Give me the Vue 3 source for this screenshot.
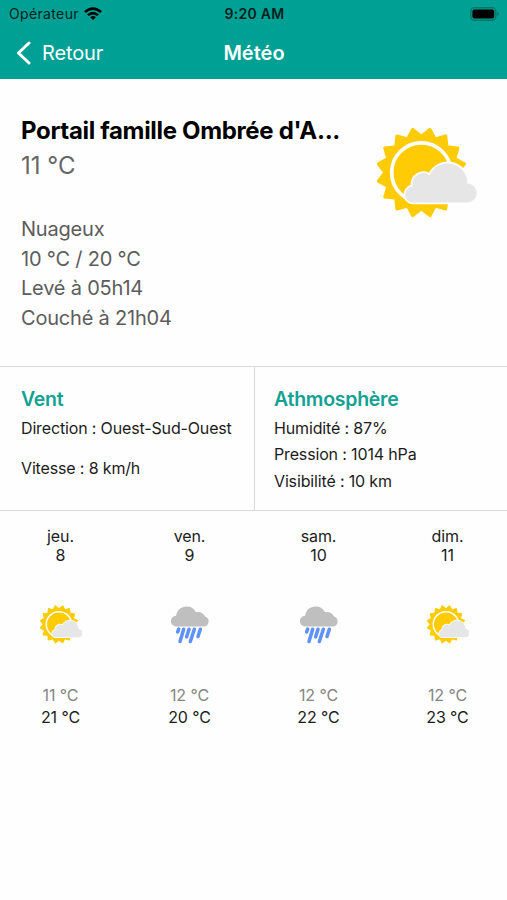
<script setup>
import { h } from 'vue'

// Sixteen-pointed sun outline with softened tips
const STEP = 22.5
const point = (r, deg) => {
  const a = (deg * Math.PI) / 180
  return `${(133 + r * Math.cos(a)).toFixed(1)} ${(136 + r * Math.sin(a)).toFixed(1)}`
}
let sunPath = `M${point(132, -STEP / 2)}`
for (let i = 0; i < 16; i++) {
  const valley = i * STEP
  sunPath += `L${point(112, valley - 2)}Q${point(107, valley)} ${point(112, valley + 2)}L${point(132, valley + STEP / 2)}`
}
sunPath += 'Z'

const cloudPath =
  'M110 226H270A28 28 0 0 0 271 169A59 59 0 0 0 158 144A33 33 0 0 0 107 177C78 183 78 222 106 226Z'

const SunCloud = () =>
  h('svg', { viewBox: '0 0 300 272' }, [
    h('path', { d: sunPath, fill: '#ffcb05', stroke: '#ffcb05', 'stroke-width': 9, 'stroke-linejoin': 'round' }),
    h('circle', { cx: 133, cy: 136, r: 89, fill: 'none', stroke: '#fefefe', 'stroke-width': 11 }),
    h('path', { d: cloudPath, fill: '#e6e6e7', stroke: '#fefefe', 'stroke-width': 11, 'paint-order': 'stroke' }),
  ])

const RainCloud = () =>
  h('svg', { viewBox: '0 0 116 115' }, [
    h('path', {
      d: 'M16 64A16 16 0 0 1 15 32A32 32 0 0 1 75 21A25 25 0 0 1 102 34A15.5 15.5 0 0 1 100 64Z',
      fill: '#bfbfbf',
    }),
    h('path', {
      d: 'M23 72L20 80M38 72L27 109M54 72L47 95M70 72L58 109M88 72L81 94',
      fill: 'none',
      stroke: '#5e92f7',
      'stroke-width': 10.5,
      'stroke-linecap': 'round',
    }),
  ])

const days = [
  { name: 'jeu.', date: 8, icon: SunCloud, kind: 'sun', min: 11, max: 21 },
  { name: 'ven.', date: 9, icon: RainCloud, kind: 'rain', min: 12, max: 20 },
  { name: 'sam.', date: 10, icon: RainCloud, kind: 'rain', min: 12, max: 22 },
  { name: 'dim.', date: 11, icon: SunCloud, kind: 'sun', min: 12, max: 23 },
]
</script>

<template>
  <div class="screen">
    <header>
      <div class="status">
        <div class="carrier">
          <span>Opérateur</span>
          <svg class="wifi" viewBox="0 0 18 13">
            <path d="M0 4.1Q9-3.7 18 4.1L16.2 6Q9-.2 1.8 6Z" />
            <path d="M3 7.2Q9 2.2 15 7.2L13.1 9.1Q9 5.8 4.9 9.1Z" />
            <path d="M6.1 10.2Q9 8 11.9 10.2L9 13Z" />
          </svg>
        </div>
        <span class="clock">9:20 AM</span>
        <svg class="battery" viewBox="0 0 30 14">
          <rect x=".8" y=".8" width="25" height="12.4" rx="3.6" fill="none" stroke="#06766b" stroke-width="1.4" />
          <rect x="2.4" y="2.5" width="21.8" height="9" rx="2" />
          <path d="M27.2 4.8Q31 7 27.2 9.2Z" fill="#06766b" />
        </svg>
      </div>
      <nav>
        <div class="back">
          <svg viewBox="0 0 15 24"><path d="M13 2L2.5 12L13 22" /></svg>
          <span>Retour</span>
        </div>
        <h1>Météo</h1>
      </nav>
    </header>

    <section class="current">
      <div class="summary">
        <h2>Portail famille Ombrée d'A...</h2>
        <p class="now">11 °C</p>
        <div class="details">
          <p>Nuageux</p>
          <p>10 °C / 20 °C</p>
          <p>Levé à 05h14</p>
          <p>Couché à 21h04</p>
        </div>
      </div>
      <SunCloud class="hero" />
    </section>

    <section class="panels">
      <div class="panel">
        <h3>Vent</h3>
        <p>Direction : Ouest-Sud-Ouest</p>
        <p class="speed">Vitesse : 8 km/h</p>
      </div>
      <div class="panel air">
        <h3>Athmosphère</h3>
        <p>Humidité : 87%</p>
        <p>Pression : 1014 hPa</p>
        <p>Visibilité : 10 km</p>
      </div>
    </section>

    <section class="forecast">
      <div v-for="d in days" :key="d.date" class="day">
        <span>{{ d.name }}</span>
        <span>{{ d.date }}</span>
        <div class="icon"><component :is="d.icon" :class="d.kind" /></div>
        <span class="min">{{ d.min }} °C</span>
        <span class="max">{{ d.max }} °C</span>
      </div>
    </section>
  </div>
</template>

<style>
body {
  background: #fefefe;
}
</style>

<style scoped>
.screen {
  width: 507px;
  height: 900px;
  overflow: hidden;
  background: #fefefe;
  color: #1c1c1c;
  font-family: Inter, "Liberation Sans", sans-serif;
}
h1, h2, h3, p {
  margin: 0;
  white-space: nowrap;
}
svg {
  display: block;
  flex: none;
}
header {
  height: 79px;
  background: #00a194;
}
.status {
  display: grid;
  grid-template-columns: 1fr auto 1fr;
  align-items: center;
  height: 27px;
  padding: 0 7px 0 9px;
  color: #041f1d;
  font-size: 14px;
}
.carrier {
  display: flex;
  align-items: center;
  gap: 5px;
  letter-spacing: 0.35px;
}
.wifi {
  width: 18px;
  height: 13px;
  fill: #000;
}
.clock {
  font-weight: 600;
  letter-spacing: 0.3px;
}
.battery {
  width: 30px;
  height: 14px;
  justify-self: end;
}
nav {
  display: grid;
  grid-template-columns: 1fr auto 1fr;
  align-items: center;
  height: 51px;
  padding: 0 15px 0 16px;
  color: #fff;
}
.back {
  display: flex;
  align-items: center;
  gap: 11px;
  font-size: 20px;
  letter-spacing: -0.15px;
}
.back svg {
  width: 15px;
  height: 24px;
  fill: none;
  stroke: #fff;
  stroke-width: 3;
  stroke-linecap: round;
  stroke-linejoin: round;
}
h1 {
  font-size: 20px;
  font-weight: 600;
}
.current {
  display: flex;
  justify-content: space-between;
  height: 287px;
  padding: 0 30px 0 21px;
}
.summary {
  padding-top: 35px;
}
h2 {
  color: #000;
  font-size: 24px;
  line-height: 34px;
  font-weight: 700;
  letter-spacing: -0.33px;
}
.now {
  color: #666;
  font-size: 24px;
  line-height: 35px;
}
.details {
  padding-top: 32px;
  color: #5c5c5c;
  font-size: 20px;
  line-height: 29.7px;
  letter-spacing: -0.2px;
}
.hero {
  width: 100px;
  height: 91px;
  margin-top: 48px;
}
.panels {
  display: grid;
  grid-template-columns: 254px 1fr;
  height: 145px;
  box-sizing: border-box;
  border-top: 1px solid #d9d9d9;
  border-bottom: 1px solid #d9d9d9;
}
.panel {
  padding: 17px 0 0 21px;
  font-size: 16px;
  line-height: 26.5px;
  letter-spacing: -0.15px;
}
.air {
  padding-left: 19px;
  border-left: 1px solid #d9d9d9;
}
h3 {
  color: #12a193;
  font-size: 19.5px;
  line-height: 30.5px;
  font-weight: 600;
  letter-spacing: -0.25px;
}
.speed {
  margin-top: 13.5px;
}
.forecast {
  display: grid;
  grid-template-columns: repeat(4, 129px);
  justify-content: center;
  padding-top: 16px;
}
.day {
  display: flex;
  flex-direction: column;
  align-items: center;
  padding-left: 1px;
  font-size: 16px;
  line-height: 19px;
  letter-spacing: -0.1px;
}
.icon {
  display: flex;
  justify-content: center;
  height: 80px;
  padding-top: 40px;
}
.sun {
  width: 42.7px;
  height: 38.7px;
  margin-left: 1px;
}
.rain {
  width: 38.7px;
  height: 38.7px;
  margin-left: 1.5px;
}
.min,
.max {
  line-height: 21.5px;
}
.min {
  color: #858585;
}
</style>
